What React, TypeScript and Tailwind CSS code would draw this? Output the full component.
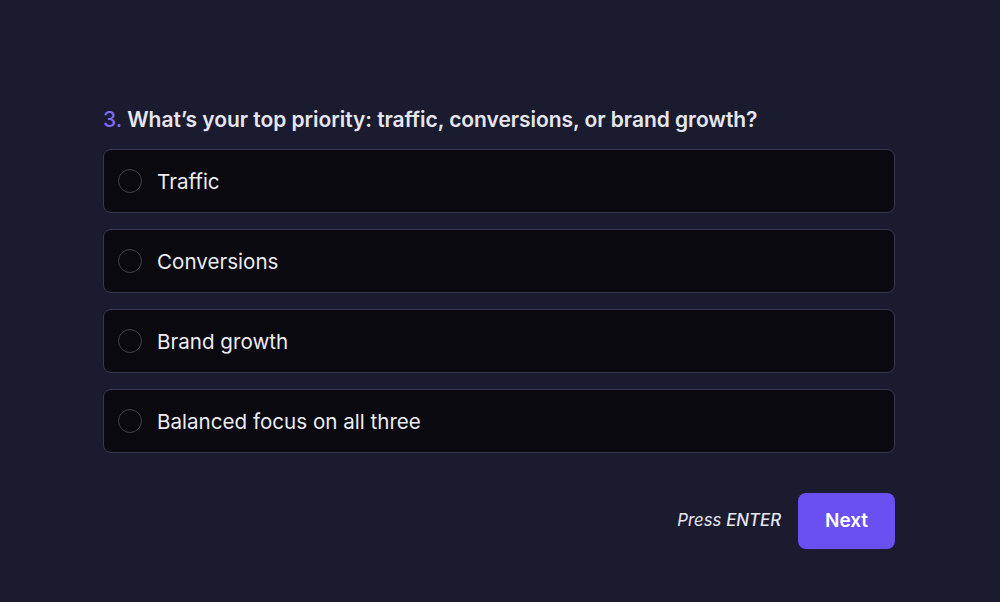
import React from "react";

const options = ["Traffic", "Conversions", "Brand growth", "Balanced focus on all three"];

export default function App() {
  return (
    <div
      className="w-[1000px] h-[602px] bg-[#1b1b2f] overflow-hidden"
      style={{ fontFamily: "Inter, 'Noto Sans', sans-serif" }}
    >
      <div className="ml-[103px] w-[792px] pt-[107px]">
        <h2 className="text-[21px] leading-[26px] font-semibold text-[#e6e6ef] tracking-[-0.05px]">
          <span className="text-[#7d6cf2] font-medium">3.</span>{" "}
          What’s your top priority: traffic, conversions, or brand growth?
        </h2>
        <div className="mt-[16px] flex flex-col gap-[16px]">
          {options.map((o) => (
            <div
              key={o}
              className="h-[64px] rounded-[8px] border border-[#36364e] bg-[#09090f] flex items-center pl-[14px]"
            >
              <span className="w-[24px] h-[24px] rounded-full border border-[#3f3f55] shrink-0" />
              <span className="ml-[15px] text-[20.6px] leading-[26px] pt-[1px] text-[#ececf2] font-normal">{o}</span>
            </div>
          ))}
        </div>
        <div className="mt-[40px] flex items-center justify-end">
          <span className="text-[16.8px] italic text-[#e6e6ef] mr-[17px]">
            Press <span className="font-medium">ENTER</span>
          </span>
          <button className="w-[97px] h-[56px] rounded-[8px] bg-[#6a50f0] text-white text-[19px] font-semibold">
            Next
          </button>
        </div>
      </div>
    </div>
  );
}
